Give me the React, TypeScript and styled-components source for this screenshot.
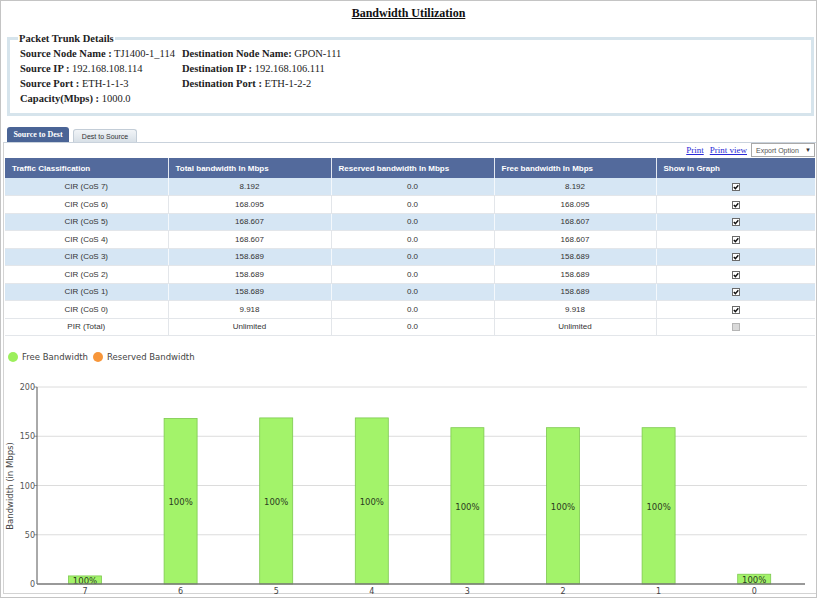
import React from "react";
import styled, { createGlobalStyle } from "styled-components";

const GlobalStyle = createGlobalStyle`
  body {
    margin: 0;
    background: #fff;
    font-family: "Liberation Serif", "Times New Roman", serif;
  }
`;

const Frame = styled.div`
  width: 817px;
  height: 598px;
  box-sizing: border-box;
  border: 1px solid #c4c4c4;
  display: flex;
  flex-direction: column;
  padding-bottom: 4px;
`;

const Title = styled.h1`
  margin: 5px 0 0;
  font-size: 12px;
  line-height: 14px;
  font-weight: bold;
  text-align: center;
  text-decoration: underline;
  color: #111;
`;

const Details = styled.fieldset`
  margin: 11.5px 2px 0 6px;
  padding: 1px 10px 7.5px;
  border: 3px solid #d6e4ec;
  min-width: 0;
  legend {
    margin-left: -2px;
    padding: 0 1px;
    font-size: 10.5px;
    line-height: 13px;
    font-weight: bold;
    color: #222;
  }
`;

const InfoGrid = styled.div`
  display: grid;
  grid-template-columns: 162px auto;
  font-size: 10.5px;
  line-height: 15px;
  color: #222;
  b {
    font-weight: bold;
  }
`;

const TabBar = styled.div`
  display: flex;
  align-items: flex-end;
  gap: 4px;
  height: 15px;
  margin-top: 11px;
  padding-left: 6px;
`;

const Tab = styled.div<{ $active?: boolean }>`
  box-sizing: border-box;
  display: flex;
  align-items: center;
  justify-content: center;
  width: ${({ $active }) => ($active ? "62px" : "64px")};
  height: ${({ $active }) => ($active ? "15px" : "13px")};
  border-radius: 3px 3px 0 0;
  background: ${({ $active }) =>
    $active ? "#4a6496" : "linear-gradient(#f1f4f7, #d8e0e7)"};
  border: ${({ $active }) => ($active ? "none" : "1px solid #c3cdd7")};
  border-bottom: none;
  color: ${({ $active }) => ($active ? "#fff" : "#333")};
  font-family: ${({ $active }) =>
    $active ? `"Liberation Serif", serif` : `"Liberation Sans", Arial, sans-serif`};
  font-weight: ${({ $active }) => ($active ? "bold" : "normal")};
  font-size: ${({ $active }) => ($active ? "8px" : "7px")};
`;

const Panel = styled.div`
  flex: 1;
  margin-left: 2px;
  padding-left: 1px;
  border-top: 1px solid #c9d2dc;
  border-left: 1px solid #d3d3d3;
  border-bottom: 1px solid #d3d3d3;
  display: flex;
  flex-direction: column;
`;

const Toolbar = styled.div`
  display: flex;
  justify-content: flex-end;
  align-items: center;
  height: 14px;
  margin-bottom: 1px;
  padding-right: 1px;
  gap: 6px;
`;

const PrintLink = styled.a`
  font-size: 9px;
  color: #2a2ad6;
  text-decoration: underline;
  cursor: pointer;
`;

const ExportSelect = styled.div`
  box-sizing: border-box;
  width: 64px;
  height: 14px;
  margin-left: -2px;
  border: 1px solid #a9a9a9;
  display: flex;
  align-items: center;
  justify-content: space-between;
  padding: 0 3px 0 4px;
  font-family: "Liberation Sans", Arial, sans-serif;
  font-size: 7px;
  color: #555;
  span:last-child {
    font-size: 6px;
    color: #333;
  }
`;

const Table = styled.table`
  width: 810px;
  table-layout: fixed;
  border-collapse: collapse;
  font-family: "Liberation Sans", Arial, sans-serif;
  font-size: 8px;
  color: #333;
  th {
    height: 20px;
    padding: 0 7px;
    background: #536a9c;
    color: #fff;
    font-weight: bold;
    text-align: left;
    border-right: 1px solid #e4e9f1;
  }
  th:last-child {
    border-right: none;
  }
  td {
    padding: 0;
    text-align: center;
    border-right: 1px solid #e3e6ea;
    border-bottom: 1px solid #e3e6ea;
  }
  td:last-child {
    border-right: none;
  }
`;

const Row = styled.tr<{ $shaded: boolean }>`
  height: 17.5px;
  background: ${({ $shaded }) => ($shaded ? "#d6e6f4" : "#fff")};
  td {
    border-right-color: ${({ $shaded }) => ($shaded ? "#f4f8fc" : "#e3e6ea")};
  }
`;

const Check = styled.span<{ $disabled?: boolean }>`
  display: inline-flex;
  align-items: center;
  justify-content: center;
  box-sizing: border-box;
  width: 8px;
  height: 8px;
  vertical-align: middle;
  border: 1px solid ${({ $disabled }) => ($disabled ? "#b5b5b5" : "#6a6a6a")};
  background: ${({ $disabled }) => ($disabled ? "#d9d9d9" : "#fff")};
`;

const ChartLegend = styled.div`
  display: flex;
  align-items: center;
  height: 12px;
  margin-top: 14.5px;
  padding-left: 3px;
  font-family: "DejaVu Sans", Verdana, sans-serif;
  font-size: 8.5px;
  color: #444;
`;

const Dot = styled.span<{ $color: string }>`
  width: 10px;
  height: 10px;
  border-radius: 50%;
  background: ${({ $color }) => $color};
`;

const LegendLabel = styled.span`
  margin: 0 5px 0 4px;
`;

const rows = [
  { cls: "CIR (CoS 7)", total: "8.192", reserved: "0.0", free: "8.192" },
  { cls: "CIR (CoS 6)", total: "168.095", reserved: "0.0", free: "168.095" },
  { cls: "CIR (CoS 5)", total: "168.607", reserved: "0.0", free: "168.607" },
  { cls: "CIR (CoS 4)", total: "168.607", reserved: "0.0", free: "168.607" },
  { cls: "CIR (CoS 3)", total: "158.689", reserved: "0.0", free: "158.689" },
  { cls: "CIR (CoS 2)", total: "158.689", reserved: "0.0", free: "158.689" },
  { cls: "CIR (CoS 1)", total: "158.689", reserved: "0.0", free: "158.689" },
  { cls: "CIR (CoS 0)", total: "9.918", reserved: "0.0", free: "9.918" },
  { cls: "PIR (Total)", total: "Unlimited", reserved: "0.0", free: "Unlimited", disabled: true },
];

const bars = [
  { label: "7", value: 8.192 },
  { label: "6", value: 168.095 },
  { label: "5", value: 168.607 },
  { label: "4", value: 168.607 },
  { label: "3", value: 158.689 },
  { label: "2", value: 158.689 },
  { label: "1", value: 158.689 },
  { label: "0", value: 9.918 },
];

// chart geometry, in svg coordinates
const AXIS_X = 32;
const BASE_Y = 221;
const SCALE = 0.985;
const STEP = 95.6;
const BAR_W = 33;

const CheckBox = ({ disabled }: { disabled?: boolean }) => (
  <Check $disabled={disabled}>
    {!disabled && (
      <svg width="6" height="6" viewBox="0 0 6 6">
        <path d="M0.8 3 L2.4 4.6 L5.3 1.2" fill="none" stroke="#111" strokeWidth="1.4" />
      </svg>
    )}
  </Check>
);

const BarChart = () => (
  <svg width="810" height="230" style={{ overflow: "visible", display: "block" }}>
    <g fontFamily="DejaVu Sans, Verdana, sans-serif">
      {[50, 100, 150, 200].map((v) => {
        const y = BASE_Y - v * SCALE;
        return (
          <g key={v}>
            <line x1={AXIS_X} x2={802} y1={y} y2={y} stroke="#dcdcdc" />
            <line x1={AXIS_X - 3} x2={AXIS_X} y1={y} y2={y} stroke="#999" />
            <text x={AXIS_X - 2} y={y + 3} fontSize="8" fill="#555" textAnchor="end">
              {v}
            </text>
          </g>
        );
      })}
      <text x={AXIS_X - 2} y={BASE_Y + 3} fontSize="8" fill="#555" textAnchor="end">
        0
      </text>
      <text
        transform={`translate(8 ${123}) rotate(-90)`}
        fontSize="8.5"
        fill="#444"
        textAnchor="middle"
      >
        Bandwidth (in Mbps)
      </text>
      {bars.map((b, i) => {
        const cx = 80 + i * STEP;
        const h = b.value * SCALE;
        const top = BASE_Y - h;
        return (
          <g key={b.label}>
            <rect
              x={cx - BAR_W / 2}
              y={top}
              width={BAR_W}
              height={h}
              fill="#a3f36a"
              stroke="#7dc94f"
              strokeWidth="0.8"
            />
            <text x={cx} y={top + h / 2 + 4} fontSize="8.5" fill="#2b3b1f" textAnchor="middle">
              100%
            </text>
            <text x={cx} y={BASE_Y + 9.5} fontSize="8" fill="#444" textAnchor="middle">
              {b.label}
            </text>
          </g>
        );
      })}
      <line x1={AXIS_X} x2={AXIS_X} y1={BASE_Y - 200 * SCALE} y2={BASE_Y} stroke="#555" />
      <line x1={AXIS_X} x2={800} y1={BASE_Y} y2={BASE_Y} stroke="#777" strokeWidth="1.6" />
    </g>
  </svg>
);

export default function App() {
  return (
    <>
      <GlobalStyle />
      <Frame>
        <Title>Bandwidth Utilization</Title>
        <Details>
          <legend>Packet Trunk Details</legend>
          <InfoGrid>
            <div>
              <b>Source Node Name :</b> TJ1400-1_114
            </div>
            <div>
              <b>Destination Node Name:</b> GPON-111
            </div>
            <div>
              <b>Source IP :</b> 192.168.108.114
            </div>
            <div>
              <b>Destination IP :</b> 192.168.106.111
            </div>
            <div>
              <b>Source Port :</b> ETH-1-1-3
            </div>
            <div>
              <b>Destination Port :</b> ETH-1-2-2
            </div>
            <div>
              <b>Capacity(Mbps) :</b> 1000.0
            </div>
          </InfoGrid>
        </Details>
        <TabBar>
          <Tab $active>Source to Dest</Tab>
          <Tab>Dest to Source</Tab>
        </TabBar>
        <Panel>
          <Toolbar>
            <PrintLink>Print</PrintLink>
            <PrintLink>Print view</PrintLink>
            <ExportSelect>
              <span>Export Option</span>
              <span>▼</span>
            </ExportSelect>
          </Toolbar>
          <Table>
            <colgroup>
              <col style={{ width: 163 }} />
              <col style={{ width: 163 }} />
              <col style={{ width: 163 }} />
              <col style={{ width: 162 }} />
              <col style={{ width: 159 }} />
            </colgroup>
            <thead>
              <tr>
                <th>Traffic Classification</th>
                <th>Total bandwidth In Mbps</th>
                <th>Reserved bandwidth In Mbps</th>
                <th>Free bandwidth In Mbps</th>
                <th>Show in Graph</th>
              </tr>
            </thead>
            <tbody>
              {rows.map((r, i) => (
                <Row key={r.cls} $shaded={i % 2 === 0 && !r.disabled}>
                  <td>{r.cls}</td>
                  <td>{r.total}</td>
                  <td>{r.reserved}</td>
                  <td>{r.free}</td>
                  <td>
                    <CheckBox disabled={r.disabled} />
                  </td>
                </Row>
              ))}
            </tbody>
          </Table>
          <ChartLegend>
            <Dot $color="#9cef5c" />
            <LegendLabel>Free Bandwidth</LegendLabel>
            <Dot $color="#f7963a" />
            <LegendLabel>Reserved Bandwidth</LegendLabel>
          </ChartLegend>
          <BarChart />
        </Panel>
      </Frame>
    </>
  );
}
